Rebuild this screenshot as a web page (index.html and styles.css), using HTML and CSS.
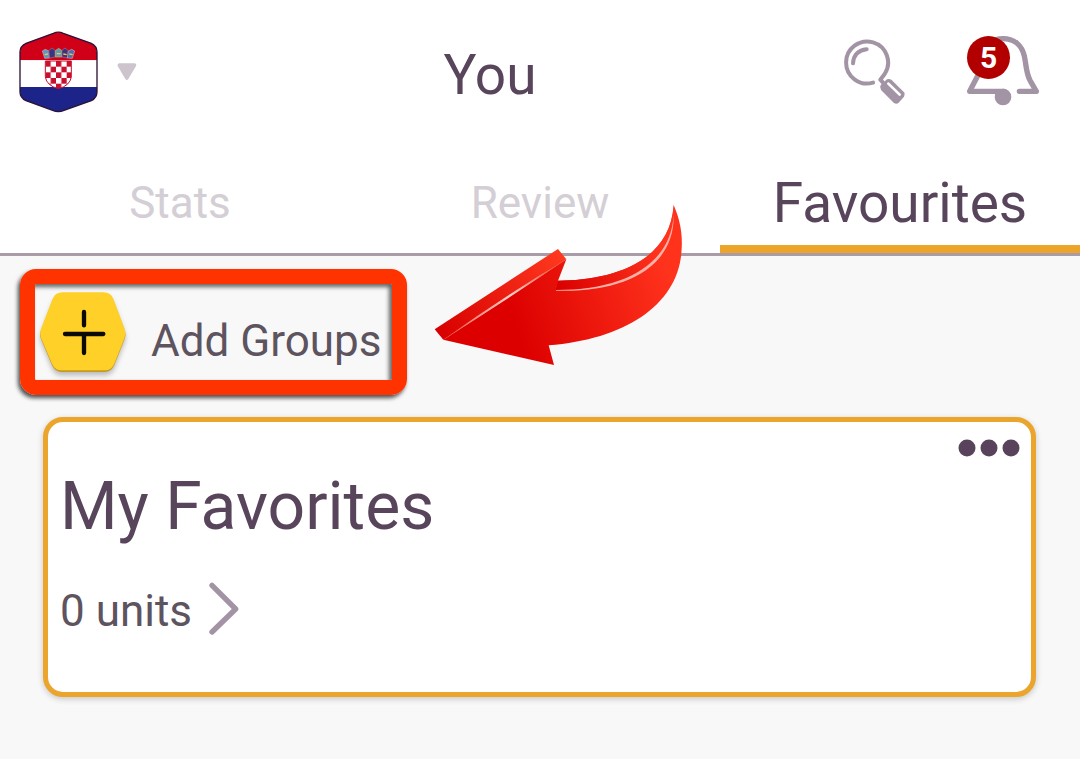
FILE: index.html
```html
<!DOCTYPE html>
<html lang="en">
<head>
    <meta charset="UTF-8">
    <meta name="viewport" content="width=device-width, initial-scale=1.0">
    <title>You</title>
    <link rel="stylesheet" href="styles.css">
</head>
<body>
    <header class="header">
        <button type="button" class="icon-button country" aria-label="Croatia, change country">
            <svg class="flag" viewBox="57 48 237 246" aria-hidden="true">
                <defs>
                    <clipPath id="flagShape">
                        <path d="M160 55Q175 48 190 55L274 85Q291 93 291 112V230Q291 248 274 257L192 286Q175 294 158 286L78 257Q60 248 60 230V112Q60 93 78 85Z"/>
                    </clipPath>
                    <clipPath id="shield">
                        <path d="M136 138H214V186Q210 212 175 221Q140 212 136 186Z"/>
                    </clipPath>
                    <pattern id="checks" x="136" y="138" width="32" height="34" patternUnits="userSpaceOnUse">
                        <path fill="#fff" d="M0 0H32V34H0Z"/>
                        <path fill="#c8102e" d="M0 0H16V17H0ZM16 17H32V34H16Z"/>
                    </pattern>
                </defs>
                <g clip-path="url(#flagShape)">
                    <path fill="#cf0018" d="M57 48H294V136H57Z"/>
                    <path fill="#fff" d="M57 136H294V216H57Z"/>
                    <path fill="#1c2389" d="M57 216H294V294H57Z"/>
                </g>
                <path fill="none" stroke="#2b1236" stroke-width="4" d="M160 55Q175 48 190 55L274 85Q291 93 291 112V230Q291 248 274 257L192 286Q175 294 158 286L78 257Q60 248 60 230V112Q60 93 78 85Z"/>
                <path fill="url(#checks)" clip-path="url(#shield)" d="M136 138H214V221H136Z"/>
                <path fill="none" stroke="#c8102e" stroke-width="3" d="M136 138H214V186Q210 212 175 221Q140 212 136 186Z"/>
                <path fill="#5a9bc4" stroke="#d9a3a8" stroke-width="2" d="M134 130L127 108L136 103L147 108L149 129Z"/>
                <path fill="#3a3480" stroke="#b06a80" stroke-width="2" d="M149 129L146 107L156 99L166 106L166 126Z"/>
                <path fill="#5e9bb0" stroke="#c9b070" stroke-width="2" d="M166 126V107L176 100L186 107V126Z"/>
                <path fill="#3a3480" stroke="#b06a80" stroke-width="2" d="M186 126V106L195 99L205 107L202 129Z"/>
                <path fill="#4c6fae" stroke="#d9a3a8" stroke-width="2" d="M202 129L205 108L215 103L224 108L217 130Z"/>
                <path fill="none" stroke="#e8c45a" stroke-width="4" d="M134 119L144 117M170 116H182M190 117L200 119M208 117L218 119"/>
            </svg>
            <svg class="caret" viewBox="350 143 60 54" aria-hidden="true">
                <path fill="#cdc4cd" d="M356 144H404Q410 146 407 152L384 191Q380 197 375 191L352 152Q350 146 356 144Z"/>
            </svg>
        </button>
        <h1 class="title">You</h1>
        <div class="actions">
            <button type="button" class="icon-button" aria-label="Search">
                <svg class="search" viewBox="70 57 189 198" aria-hidden="true">
                    <g fill="none" stroke="#a394a5" stroke-width="12" stroke-linecap="round" stroke-linejoin="round">
                        <path d="M160 188A63 63 0 1 1 195 162Q189 170 182 179L190 188"/>
                        <path d="M100 130Q103 92 141 88"/>
                    </g>
                    <path fill="#a394a5" d="M183 195L202 178Q209 175 216 180L253 217Q258 223 253 230L237 248Q230 254 222 248L184 210Q179 202 183 195Z"/>
                    <path fill="none" stroke="#fff" stroke-width="8" stroke-linecap="round" d="M206 191L240 224"/>
                </svg>
            </button>
            <button type="button" class="icon-button bell-button" aria-label="Notifications">
                <svg class="bell" viewBox="438 45 222 213" aria-hidden="true">
                    <g fill="none" stroke="#a394a5" stroke-width="16" stroke-linecap="round" stroke-linejoin="round">
                        <path d="M552 214H449L474 166C482 142 480 125 487 105C498 70 520 56 549 56C586 56 606 79 613 108C619 136 618 158 630 181L649 214H598"/>
                    </g>
                    <circle cx="549" cy="231" r="25" fill="#a394a5"/>
                </svg>
                <span class="badge">5</span>
            </button>
        </div>
    </header>

    <nav class="tabs">
        <a href="#stats" class="tab">Stats</a>
        <a href="#review" class="tab">Review</a>
        <a href="#favourites" class="tab active" aria-current="page">Favourites</a>
    </nav>

    <main class="content">
        <div class="add-row">
            <button type="button" class="add-groups">
                <svg class="plus" viewBox="118 108 264 252" aria-hidden="true">
                    <path class="plus-shadow" fill="#c49a20" d="M188 116H312Q332 116 341 135L375 226Q380 239 375 252L344 331Q335 351 315 351H186Q166 351 157 331L124 252Q119 239 124 226L159 135Q168 116 188 116Z"/>
                    <path fill="#ffd027" d="M188 112H312Q332 112 341 131L375 222Q380 235 375 248L344 326Q335 346 315 346H186Q166 346 157 326L124 248Q119 235 124 222L159 131Q168 112 188 112Z"/>
                    <path fill="none" stroke="#0c0a04" stroke-width="13" stroke-linecap="round" d="M253 171V211M196 237H311M253 240V294"/>
                </svg>
                <span class="add-label">Add Groups</span>
            </button>
            <svg class="arrow" viewBox="42 42 747 486" aria-hidden="true">
                <defs>
                    <linearGradient id="arrowFace" gradientUnits="userSpaceOnUse" x1="280" y1="400" x2="740" y2="240">
                        <stop offset="0" stop-color="#dc0000"/>
                        <stop offset="1" stop-color="#ff321c"/>
                    </linearGradient>
                    <linearGradient id="arrowEdge" gradientUnits="userSpaceOnUse" x1="60" y1="430" x2="430" y2="190">
                        <stop offset="0" stop-color="#d80000"/>
                        <stop offset="1" stop-color="#ff3a20"/>
                    </linearGradient>
                    <linearGradient id="arrowTop" gradientUnits="userSpaceOnUse" x1="410" y1="290" x2="720" y2="180">
                        <stop offset="0" stop-color="#d90000"/>
                        <stop offset="1" stop-color="#ff341e"/>
                    </linearGradient>
                    <linearGradient id="arrowShine" gradientUnits="userSpaceOnUse" x1="70" y1="448" x2="440" y2="208">
                        <stop offset="0" stop-color="#f65040"/>
                        <stop offset=".55" stop-color="#ffd0ca"/>
                        <stop offset="1" stop-color="#f53420"/>
                    </linearGradient>
                </defs>
                <path fill="url(#arrowFace)" d="M70 449L439 208L414 272C560 272 750 225 761 45C778 85 788 125 785 175C780 340 620 448 386 466L402 525Z"/>
                <path fill="url(#arrowTop)" d="M414 272C560 272 750 225 761 45C772 205 640 302 408 301Z"/>
                <path fill="url(#arrowEdge)" d="M44 418L414 177L439 208L70 449Z"/>
                <path fill="url(#arrowShine)" d="M70 449Q242 325 439 208Q260 330 70 449Z"/>
                <path fill="#ffb0a6" d="M408 300C620 300 752 220 761 75C764 235 610 309 408 302Z"/>
            </svg>
        </div>

        <section class="card">
            <button type="button" class="icon-button menu" aria-label="More options">
                <svg class="dots" viewBox="0 0 62 18" aria-hidden="true">
                    <g fill="#58425c">
                        <circle cx="9" cy="9" r="8.5"/>
                        <circle cx="31" cy="9" r="8.5"/>
                        <circle cx="53" cy="9" r="8.5"/>
                    </g>
                </svg>
            </button>
            <h2 class="card-title">My Favorites</h2>
            <a href="#units" class="units">
                <span class="units-label">0 units</span>
                <svg class="chevron" viewBox="537 67 90 159" aria-hidden="true">
                    <path fill="none" stroke="#a394a5" stroke-width="16" stroke-linecap="round" stroke-linejoin="round" d="M546 77L617 148L546 217"/>
                </svg>
            </a>
        </section>
    </main>
</body>
</html>
```

FILE: styles.css
```css
* {
    box-sizing: border-box;
}
body {
    margin: 0;
    min-height: 100vh;
    background: #f8f8f8;
    color: #58455b;
    font-family: Roboto, sans-serif;
    font-size: 44px;
}
svg {
    display: block;
    flex-shrink: 0;
}
.icon-button {
    display: flex;
    align-items: center;
    padding: 0;
    border: none;
    background: none;
    cursor: pointer;
}

/* Top bar */
.header {
    display: flex;
    justify-content: space-between;
    align-items: center;
    height: 144px;
    padding: 0 40px 0 19px;
    background: white;
}
.country {
    gap: 19px;
}
.flag {
    width: 79px;
    height: 82px;
}
.caret {
    width: 20px;
    height: 18px;
}
.title {
    margin: 0;
    padding-top: 6px;
    font-size: 55px;
    font-weight: 400;
    line-height: 64px;
}
.actions {
    display: flex;
    align-items: center;
    gap: 60px;
}
.search {
    width: 63px;
    height: 66px;
}
.bell {
    width: 74px;
    height: 71px;
}
.bell-button {
    position: relative;
    padding-bottom: 4px;
}
.badge {
    position: absolute;
    top: 1px;
    left: 1px;
    width: 43px;
    height: 43px;
    border-radius: 50%;
    background: #b20000;
    color: white;
    font-family: Roboto, sans-serif;
    font-size: 30px;
    font-weight: 700;
    line-height: 44px;
    text-align: center;
}

/* Tabs */
.tabs {
    display: grid;
    grid-template-columns: repeat(3, 1fr);
    height: 112px;
    border-bottom: 3px solid #a99ba8;
    background: white;
}
.tab {
    display: flex;
    justify-content: center;
    align-items: center;
    padding-top: 17px;
    border-bottom: 8px solid transparent;
    color: #d4ced5;
    text-decoration: none;
}
.tab.active {
    border-bottom-color: #eca528;
    color: #58455b;
    font-size: 55px;
}

/* Groups */
.content {
    padding: 13px 44px 60px 43px;
}
.add-row {
    position: relative;
    margin-left: -23px;
}
.add-groups {
    display: flex;
    align-items: center;
    gap: 24px;
    height: 126px;
    padding: 2px 11px 0 4px;
    border: 15px solid #ff3300;
    border-radius: 16px;
    background: none;
    box-shadow: -2px 3px 4px rgba(0, 0, 0, 0.7), inset -3px 3px 4px rgba(0, 0, 0, 0.6);
    color: #5d545f;
    font-family: Roboto, sans-serif;
    font-size: 44px;
    cursor: pointer;
}
.plus {
    width: 88px;
    height: 84px;
    overflow: visible;
}
.plus-shadow {
    filter: drop-shadow(0 10px 8px rgba(0, 0, 0, 0.25));
}
.add-label {
    padding-top: 16px;
}
/* Arrow lies over the tab line and points at the button */
.arrow {
    position: absolute;
    top: -65px;
    left: 414px;
    width: 249px;
    height: 162px;
    pointer-events: none;
}
.card {
    display: flex;
    flex-direction: column;
    align-items: flex-start;
    min-height: 280px;
    margin-top: 22px;
    padding: 17px 11px 32px 12px;
    border: 5px solid #eca52c;
    border-radius: 20px;
    background: white;
    box-shadow: 0 2px 6px rgba(0, 0, 0, 0.2);
}
.menu {
    align-self: flex-end;
}
.dots {
    width: 62px;
    height: 18px;
}
.card-title {
    margin: 10px 0 0;
    font-size: 66px;
    font-weight: 400;
    line-height: 80px;
}
.units {
    display: flex;
    align-items: center;
    gap: 17px;
    margin-top: 32px;
    color: #5d545f;
    line-height: 54px;
    text-decoration: none;
}
.units-label {
    padding-top: 5px;
}
.chevron {
    width: 30px;
    height: 53px;
}
```
